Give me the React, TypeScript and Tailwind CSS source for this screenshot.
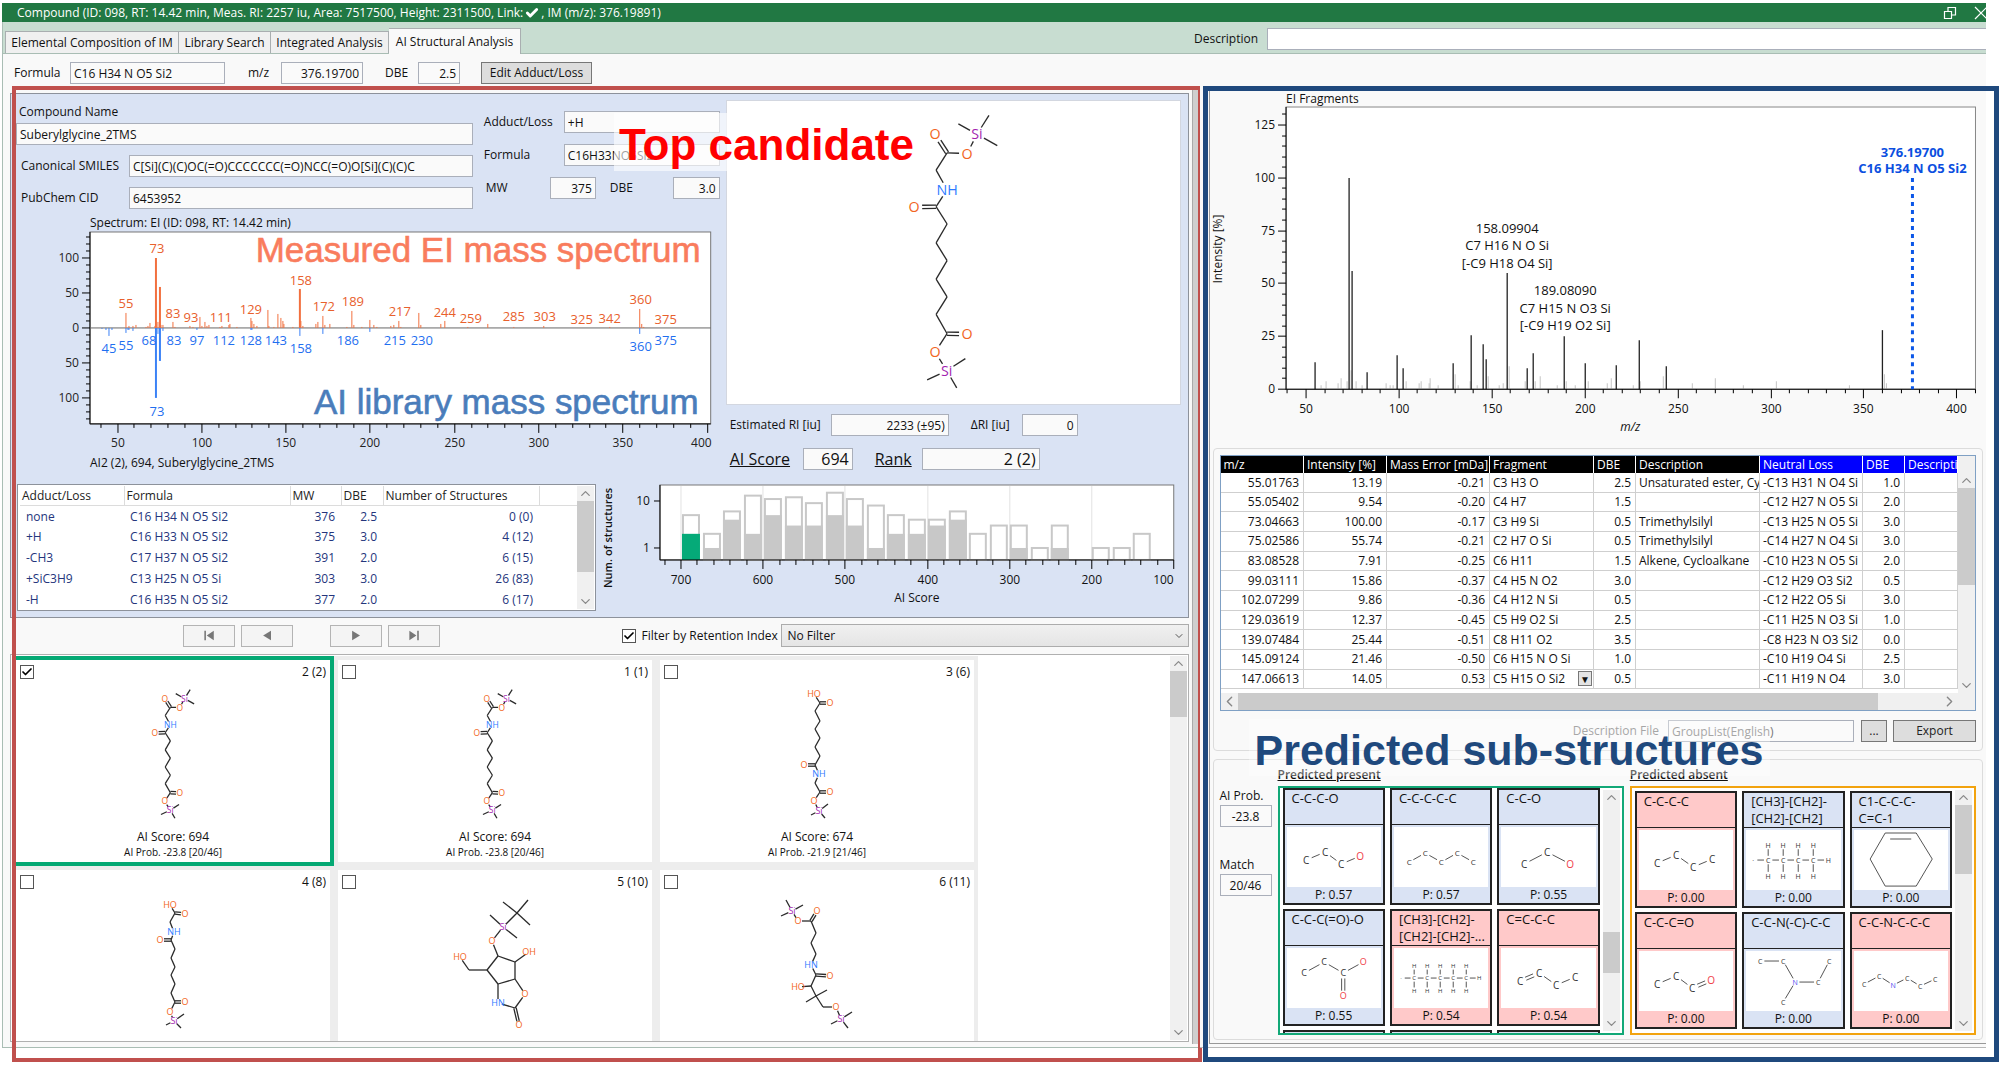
import { useId } from "react";
import { Check, ChevronDown, ChevronLeft, ChevronRight, ChevronUp } from "lucide-react";
import clsx from "clsx";

type Atom = [number, number, string?];
type Bond = [number, number, number?];
type Graph = { atoms: Atom[]; bonds: Bond[] };

const ATOM_COLORS: Record<string, string> = {
  O: "#f26522",
  HO: "#f26522",
  OH: "#f26522",
  NH: "#2f7bff",
  HN: "#2f7bff",
  Si: "#a31fb0",
};

const FRAGMENT_COLORS: Record<string, string> = { C: "#333", H: "#333", O: "#f03c46", N: "#4646f0" };

// Suberylglycine bis-TMS ester
const SUBERYL: Graph = {
  atoms: [
    [832, 402, "Si"], [776, 371], [868, 345], [893, 436], [802, 460, "O"], [742, 458], [706, 402, "O"],
    [709, 510], [742, 569, "NH"], [709, 620], [643, 621, "O"], [742, 672], [709, 729], [742, 782],
    [709, 838], [742, 891], [709, 944], [742, 1002], [802, 1003, "O"], [706, 1057, "O"],
    [741, 1113, "Si"], [797, 1077], [682, 1141], [771, 1165],
  ],
  bonds: [
    [0, 1], [0, 2], [0, 3], [0, 4], [4, 5], [5, 6, 2], [5, 7], [7, 8], [8, 9], [9, 10, 2], [9, 11], [11, 12],
    [12, 13], [13, 14], [14, 15], [15, 16], [16, 17], [17, 18, 2], [17, 19], [19, 20], [20, 21], [20, 22], [20, 23],
  ],
};

const MONO_TMS_GLYCINE: Graph = {
  atoms: [
    [154, 10, "HO"], [160, 19], [170, 19, "O"], [155, 27], [160, 37], [155, 45], [160, 54], [155, 63], [160, 72],
    [155, 81], [144, 81, "O"], [159, 90, "NH"], [155, 99], [160, 108], [170, 108, "O"], [154, 117, "O"],
    [159, 127, "Si"], [168, 120], [151, 131], [165, 134],
  ],
  bonds: [
    [0, 1], [1, 2, 2], [1, 3], [3, 4], [4, 5], [5, 6], [6, 7], [7, 8], [8, 9], [9, 10, 2], [9, 11], [11, 12],
    [12, 13], [13, 14, 2], [13, 15], [15, 16], [16, 17], [16, 18], [16, 19],
  ],
};

const MONO_TMS_ACID: Graph = {
  atoms: [
    [154, 11, "HO"], [159, 19], [169, 20, "O"], [154, 28], [158, 38, "NH"], [155, 46], [144, 46, "O"], [159, 55],
    [155, 64], [159, 73], [155, 81], [159, 90], [155, 99], [159, 108], [169, 108, "O"], [154, 118, "O"],
    [158, 127, "Si"], [168, 120], [150, 131], [165, 134],
  ],
  bonds: [
    [0, 1], [1, 2, 2], [1, 3], [3, 4], [4, 5], [5, 6, 2], [5, 7], [7, 8], [8, 9], [9, 10], [10, 11], [11, 12],
    [12, 13], [13, 14, 2], [13, 15], [15, 16], [16, 17], [16, 18], [16, 19],
  ],
};

const TBDMS_CARBAMATE: Graph = {
  atoms: [
    [179, 19], [165, 8], [190, 6], [192, 31], [165, 33, "Si"], [152, 21], [179, 44], [154, 47, "O"], [160, 62],
    [149, 76], [131, 76], [122, 63, "HO"], [160, 90], [177, 85], [177, 68], [191, 58, "OH"], [160, 109, "HN"],
    [177, 114], [187, 100, "O"], [181, 131, "O"],
  ],
  bonds: [
    [0, 1], [0, 2], [0, 3], [0, 4], [4, 5], [4, 6], [4, 7], [7, 8], [8, 9], [9, 10], [10, 11], [9, 12], [12, 13],
    [13, 14], [14, 8], [14, 15], [12, 16], [16, 17], [17, 18], [18, 13], [17, 19, 2],
  ],
};

const PANTOTHENATE_LIKE: Graph = {
  atoms: [
    [132, 17, "Si"], [126, 6], [143, 11], [121, 22], [138, 27, "O"], [151, 27], [157, 17, "O"], [156, 39],
    [151, 49], [156, 60], [151, 71, "HN"], [156, 81], [170, 82, "O"], [151, 92], [138, 93, "HO"], [156, 102],
    [167, 96], [146, 108], [163, 113], [176, 113, "O"], [181, 125, "Si"], [192, 118], [171, 130], [188, 134],
  ],
  bonds: [
    [0, 1], [0, 2], [0, 3], [0, 4], [4, 5], [5, 6, 2], [5, 7], [7, 8], [8, 9], [9, 10], [10, 11], [11, 12, 2],
    [11, 13], [13, 14], [13, 15], [15, 16], [15, 17], [15, 18], [18, 19], [19, 20], [20, 21], [20, 22], [20, 23],
  ],
};

function Molecule({
  graph,
  fontSize,
  stroke,
  trim,
  split,
  colors = ATOM_COLORS,
}: {
  graph: Graph;
  fontSize: number;
  stroke: number;
  trim: number;
  split: number;
  colors?: Record<string, string>;
}) {
  return (
    <g fontFamily='"Open Sans", sans-serif' fontSize={fontSize} textAnchor="middle">
      {graph.bonds.map(([a, b, order = 1], i) => {
        const [x1, y1, la] = graph.atoms[a];
        const [x2, y2, lb] = graph.atoms[b];
        const len = Math.hypot(x2 - x1, y2 - y1);
        const ux = (x2 - x1) / len;
        const uy = (y2 - y1) / len;
        const ta = la ? trim : 0;
        const tb = lb ? trim : 0;
        const offsets = order === 2 ? [-split, split] : [0];
        return offsets.map((o) => (
          <line
            key={`${i}:${o}`}
            x1={x1 + ux * ta - uy * o}
            y1={y1 + uy * ta + ux * o}
            x2={x2 - ux * tb - uy * o}
            y2={y2 - uy * tb + ux * o}
            stroke="#2a2a2a"
            strokeWidth={stroke}
          />
        ));
      })}
      {graph.atoms.map(([x, y, label], i) =>
        label ? (
          <text key={i} x={x} y={y + fontSize * 0.36} fill={colors[label] ?? "#333"}>
            {label}
          </text>
        ) : null,
      )}
    </g>
  );
}

const chain = (...atoms: Atom[]): Graph => ({
  atoms,
  bonds: atoms.slice(1).map((_, i) => [i, i + 1] as Bond),
});

// Fully drawn CH2 chain with an open left end
const hydrocarbon = (xs: number[], top: number, bottom: number, endX: number): Graph => {
  const atoms: Atom[] = [[7, 30, "·"], ...xs.map((x) => [x, 30, "C"] as Atom), [endX, 30, "H"]];
  const bonds: Bond[] = atoms.slice(1).map((_, i) => [i, i + 1] as Bond);
  xs.forEach((x, i) => {
    atoms.push([x, top, "H"], [x, bottom, "H"]);
    bonds.push([i + 1, atoms.length - 2], [i + 1, atoms.length - 1]);
  });
  return { atoms, bonds };
};

type Tile = { name: string; p: string; tone: "blue" | "red"; graph: Graph; size?: number };

const PRESENT: Tile[] = [
  { name: "C-C-C-O", p: "0.57", tone: "blue", graph: chain([19, 33, "C"], [38, 25, "C"], [54, 37, "C"], [73, 29, "O"]) },
  {
    name: "C-C-C-C-C",
    p: "0.57",
    tone: "blue",
    size: 8,
    graph: chain([15, 35, "C"], [31, 26, "C"], [47, 35, "C"], [63, 26, "C"], [79, 35, "C"]),
  },
  { name: "C-C-O", p: "0.55", tone: "blue", graph: chain([23, 37, "C"], [46, 25, "C"], [69, 37, "O"]) },
  {
    name: "C-C-C(=O)-O",
    p: "0.55",
    tone: "blue",
    size: 9,
    graph: {
      atoms: [[17, 25, "C"], [37, 14, "C"], [56, 25, "C"], [76, 14, "O"], [56, 48, "O"]],
      bonds: [[0, 1], [1, 2], [2, 3], [2, 4, 2]],
    },
  },
  { name: "[CH3]-[CH2]-\n[CH2]-[CH2]-...", p: "0.54", tone: "red", size: 6, graph: hydrocarbon([20, 33, 46, 59, 72], 18, 43, 85) },
  {
    name: "C=C-C-C",
    p: "0.54",
    tone: "red",
    graph: { atoms: [[19, 33, "C"], [38, 25, "C"], [55, 37, "C"], [74, 29, "C"]], bonds: [[0, 1, 2], [1, 2], [2, 3]] },
  },
];

const NEXT_PRESENT: Tile[] = [0, 1, 2].map(() => ({ name: "", p: "", tone: "blue", graph: { atoms: [], bonds: [] } }));

const ABSENT: Tile[] = [
  { name: "C-C-C-C", p: "0.00", tone: "red", graph: chain([18, 33, "C"], [37, 25, "C"], [54, 37, "C"], [73, 29, "C"]) },
  { name: "[CH3]-[CH2]-\n[CH2]-[CH2]", p: "0.00", tone: "blue", size: 7, graph: hydrocarbon([22, 37, 52, 67], 15, 46, 82) },
  {
    name: "C1-C-C-C-\nC=C-1",
    p: "0.00",
    tone: "blue",
    graph: {
      atoms: [[31, 3], [62, 3], [78, 29], [62, 56], [31, 56], [16, 29], [36, 9], [57, 9]],
      bonds: [[0, 1], [1, 2], [2, 3], [3, 4], [4, 5], [5, 0], [6, 7]],
    },
  },
  {
    name: "C-C-C=O",
    p: "0.00",
    tone: "red",
    graph: { atoms: [[18, 33, "C"], [37, 25, "C"], [53, 37, "C"], [72, 29, "O"]], bonds: [[0, 1], [1, 2], [2, 3, 2]] },
  },
  {
    name: "C-C-N(-C)-C-C",
    p: "0.00",
    tone: "blue",
    size: 7,
    graph: {
      atoms: [[14, 10, "C"], [37, 10, "C"], [49, 31, "N"], [37, 51, "C"], [72, 31, "C"], [83, 10, "C"]],
      bonds: [[0, 1], [1, 2], [2, 3], [2, 4], [4, 5]],
    },
  },
  {
    name: "C-C-N-C-C-C",
    p: "0.00",
    tone: "red",
    size: 7,
    graph: chain([10, 33, "C"], [25, 25, "C"], [39, 34, "N"], [53, 27, "C"], [66, 35, "C"], [81, 28, "C"]),
  },
];

const CANDIDATES: { rank: string; graph: Graph; score?: string; prob?: string; selected?: boolean }[] = [
  { rank: "2 (2)", graph: SUBERYL, score: "694", prob: "-23.8 [20/46]", selected: true },
  { rank: "1 (1)", graph: SUBERYL, score: "694", prob: "-23.8 [20/46]" },
  { rank: "3 (6)", graph: MONO_TMS_GLYCINE, score: "674", prob: "-21.9 [21/46]" },
  { rank: "4 (8)", graph: MONO_TMS_ACID },
  { rank: "5 (10)", graph: TBDMS_CARBAMATE },
  { rank: "6 (11)", graph: PANTOTHENATE_LIKE },
];

const ADDUCTS = [
  ["none", "C16 H34 N O5 Si2", "376", "2.5", "0 (0)"],
  ["+H", "C16 H33 N O5 Si2", "375", "3.0", "4 (12)"],
  ["-CH3", "C17 H37 N O5 Si2", "391", "2.0", "6 (15)"],
  ["+SiC3H9", "C13 H25 N O5 Si", "303", "3.0", "26 (83)"],
  ["-H", "C16 H35 N O5 Si2", "377", "2.0", "6 (17)"],
];

const FRAGMENTS = [
  ["55.01763", "13.19", "-0.21", "C3 H3 O", "2.5", "Unsaturated ester, Cy", "-C13 H31 N O4 Si", "1.0"],
  ["55.05402", "9.54", "-0.20", "C4 H7", "1.5", "", "-C12 H27 N O5 Si", "2.0"],
  ["73.04663", "100.00", "-0.17", "C3 H9 Si", "0.5", "Trimethylsilyl", "-C13 H25 N O5 Si", "3.0"],
  ["75.02586", "55.74", "-0.21", "C2 H7 O Si", "0.5", "Trimethylsilyl", "-C14 H27 N O4 Si", "3.0"],
  ["83.08528", "7.91", "-0.25", "C6 H11", "1.5", "Alkene, Cycloalkane", "-C10 H23 N O5 Si", "2.0"],
  ["99.03111", "15.86", "-0.37", "C4 H5 N O2", "3.0", "", "-C12 H29 O3 Si2", "0.5"],
  ["102.07299", "9.86", "-0.36", "C4 H12 N Si", "0.5", "", "-C12 H22 O5 Si", "3.0"],
  ["129.03619", "12.37", "-0.45", "C5 H9 O2 Si", "2.5", "", "-C11 H25 N O3 Si", "1.0"],
  ["139.07484", "25.44", "-0.51", "C8 H11 O2", "3.5", "", "-C8 H23 N O3 Si2", "0.0"],
  ["145.09124", "21.46", "-0.50", "C6 H15 N O Si", "1.0", "", "-C10 H19 O4 Si", "2.5"],
  ["147.06613", "14.05", "0.53", "C5 H15 O Si2", "0.5", "", "-C11 H19 N O4", "3.0"],
];

const MEASURED = [
  [55, 22], [57, 3], [59, 3], [61, 4], [67, 2], [68, 3], [69, 7], [72, 3], [73, 100], [74, 9], [75, 59], [76, 4],
  [77, 4], [83, 8], [84, 2], [93, 3], [95, 2], [99, 16], [100, 3], [102, 9], [103, 3], [104, 4], [111, 2],
  [112, 3], [116, 4], [117, 5], [121, 2], [129, 14], [130, 10], [131, 6], [133, 3], [139, 25], [140, 3],
  [143, 2], [145, 20], [147, 14], [148, 10], [149, 5], [154, 2], [158, 55], [159, 10], [160, 3], [168, 5],
  [169, 9], [172, 17], [173, 4], [176, 6], [186, 2], [189, 24], [190, 4], [195, 2], [200, 12], [202, 4],
  [204, 2], [212, 3], [214, 4], [217, 10], [218, 2], [229, 22], [230, 4], [242, 6], [244, 10], [258, 2],
  [270, 5], [285, 2], [303, 3], [342, 1], [360, 27], [361, 6], [362, 2],
];

const LIBRARY = [
  [41, 2], [43, 3], [45, 11], [47, 3], [55, 7], [56, 3], [57, 3], [59, 4], [73, 100], [74, 8], [75, 47],
  [77, 4], [97, 3], [129, 3], [130, 3], [158, 12], [172, 8], [200, 5], [360, 8],
];

const MEASURED_LABELS: [string, number, number][] = [
  ["73", 141, 35], ["158", 285, 67], ["55", 110, 90], ["83", 157, 100], ["93", 175, 104], ["111", 205, 104],
  ["129", 235, 96], ["172", 308, 93], ["189", 337, 88], ["217", 384, 98], ["244", 429, 99], ["259", 455, 105],
  ["285", 498, 103], ["303", 529, 103], ["325", 566, 106], ["342", 594, 105], ["375", 650, 106], ["360", 625, 86],
];

const LIBRARY_LABELS: [string, number, number][] = [
  ["45", 93, 135], ["55", 110, 132], ["68", 133, 127], ["83", 158, 127], ["97", 181, 127], ["112", 208, 127],
  ["128", 235, 127], ["143", 260, 127], ["158", 285, 135], ["186", 332, 127], ["215", 379, 127],
  ["230", 406, 127], ["360", 625, 133], ["375", 650, 127], ["73", 141, 198],
];

const HISTOGRAM = [
  [5, 2], [2, 1], [6, 4], [13, 2], [11, 5], [12, 3], [9, 3], [15, 5], [11, 3], [8, 1], [5, 2], [4, 2], [4, 3],
  [6, 4], [2, 0], [3, 0], [3, 1], [1, 0], [3, 1], [0, 0], [1, 0], [1, 0], [2, 0],
];

const ASSIGNED = [
  [55, 13], [73, 100], [75, 55.7], [83, 7.9], [99, 15.9], [102, 9.9], [129, 12.4], [139, 25.4], [145, 21.5],
  [147, 14], [158, 55], [169, 10], [172, 17], [189, 25], [200, 12.5], [217, 11.5], [229, 23], [244, 11], [360, 28],
];

const UNASSIGNED = [
  [58, 2], [61, 4], [67, 3], [69, 5], [72, 4], [74, 9], [77, 4], [80, 2], [93, 3], [95, 2], [97, 2], [104, 4],
  [111, 3], [112, 4], [116, 3], [117, 5], [121, 2], [130, 7], [132, 2], [138, 4], [142, 2], [148, 6], [154, 2],
  [156, 3], [159, 11], [168, 4], [173, 4], [176, 6], [185, 2], [190, 4], [195, 2], [202, 4], [212, 3], [214, 5],
  [226, 2], [230, 4], [242, 6], [258, 3], [270, 5], [285, 2], [303, 4], [342, 2], [361, 7], [362, 3],
];

const range = (from: number, to: number, step: number) =>
  Array.from({ length: Math.floor((to - from) / step) + 1 }, (_, i) => from + i * step);

function MirrorSpectrum() {
  const x = (m: number) => Math.round(101.5 + (m - 50) * 1.686);
  const y = (v: number) => Math.round(115 - v * 0.703);
  return (
    <svg viewBox="0 0 704 262" className="block w-full" fontSize="12" textAnchor="middle">
      <text x="74" y="14" textAnchor="start" fill="#111">Spectrum: EI (ID: 098, RT: 14.42 min)</text>
      <rect x="74" y="19" width="621" height="192" fill="#fff" stroke="#777" />
      <g stroke="#000">
        <path d="M74 19V211H695" fill="none" strokeWidth="1" />
        {range(-130, 130, 10).map((v) => (
          <line key={v} x1={v % 50 ? 70 : 66} x2="74" y1={y(v)} y2={y(v)} />
        ))}
        {range(40, 400, 10).map((m) => (
          <line key={m} x1={x(m)} x2={x(m)} y1="211" y2={m % 50 ? 215 : 220} />
        ))}
      </g>
      <line x1="74" x2="695" y1="115" y2="115" stroke="#666" />
      {[100, 50, 0, -50, -100].map((v) => (
        <text key={v} x="63" y={y(v) + 4} textAnchor="end" fill="#222">{Math.abs(v)}</text>
      ))}
      {range(50, 350, 50).map((m) => (
        <text key={m} x={x(m)} y="234" fill="#222">{m}</text>
      ))}
      <text x="696" y="234" textAnchor="end" fill="#222">400</text>
      {MEASURED.map(([m, v]) => (
        <line key={m} x1={x(m)} x2={x(m)} y1="115" y2={y(v)} stroke="#f2703f" strokeWidth={v > 40 ? 2 : 1} />
      ))}
      {LIBRARY.map(([m, v]) => (
        <line key={m} x1={x(m)} x2={x(m)} y1="115" y2={y(-v)} stroke="#3b82f6" strokeWidth={v > 40 ? 2 : 1} />
      ))}
      <g fill="#e8602c" fontSize="13">
        {MEASURED_LABELS.map(([t, lx, ly]) => (
          <text key={t} x={lx} y={ly + 5}>{t}</text>
        ))}
      </g>
      <g fill="#1f6ff0" fontSize="13">
        {LIBRARY_LABELS.map(([t, lx, ly]) => (
          <text key={t} x={lx} y={ly + 5}>{t}</text>
        ))}
      </g>
      <text x="74" y="254" textAnchor="start" fill="#111">AI2 (2), 694, Suberylglycine_2TMS</text>
      <g fontFamily='"Liberation Sans", Arial, sans-serif' fontSize="35" textAnchor="end" strokeWidth="0.6">
        <text x="685" y="49" fill="#f97c5d" stroke="#f97c5d">Measured EI mass spectrum</text>
        <text x="683" y="201" fill="#4a7dbb" stroke="#4a7dbb">AI library mass spectrum</text>
      </g>
    </svg>
  );
}

function ScoreHistogram() {
  const x = (s: number) => Math.round(85 + (700 - s) * 0.822);
  const y = (n: number) => 67 - 47 * Math.log10(n);
  return (
    <svg viewBox="0 0 592 134" className="block w-full" fontSize="12" textAnchor="middle" fill="#111">
      <text transform="translate(16 57) rotate(-90)" fontWeight="600" fontSize="11">Num. of structures</text>
      <rect x="64" y="4" width="514" height="75" fill="#fff" stroke="#777" />
      {range(200, 700, 100).map((s) => (
        <line key={s} x1={x(s)} x2={x(s)} y1="5" y2="79" stroke="#e2e2e2" />
      ))}
      {HISTOGRAM.map(([total, known], i) => {
        const left = 87 + Math.round(i * 20.5);
        return total ? (
          <g key={i}>
            <rect x={left} y={y(total)} width="16" height={79 - y(total)} fill="#fff" stroke="#c8c8c8" strokeWidth="2" />
            {known > 0 && (
              <rect x={left - 1} y={y(known)} width="18" height={79 - y(known)} fill={i ? "#c8c8c8" : "#05aa78"} />
            )}
          </g>
        ) : null;
      })}
      <g stroke="#000">
        <path d="M64 4V79H578" fill="none" />
        <path d="M58 20H64M58 67H64" />
        {range(100, 720, 20).map((s) => (
          <line key={s} x1={x(s)} x2={x(s)} y1="79" y2={s % 100 ? 84 : 88} />
        ))}
      </g>
      <text x="54" y="24" textAnchor="end">10</text>
      <text x="54" y="71" textAnchor="end">1</text>
      {range(200, 700, 100).map((s) => (
        <text key={s} x={x(s)} y="103">{s}</text>
      ))}
      <text x="578" y="103" textAnchor="end">100</text>
      <text x="321" y="121">AI Score</text>
    </svg>
  );
}

function FragmentChart() {
  const x = (m: number) => Math.round(96 + (m - 50) * 1.858);
  const y = (v: number) => Math.round(299 - v * 2.112);
  return (
    <svg viewBox="0 0 776 355" className="block w-full" fontSize="12" textAnchor="middle" fill="#111">
      <text x="76" y="13" textAnchor="start">EI Fragments</text>
      <text transform="translate(12 159) rotate(-90)">Intensity [%]</text>
      <rect x="76" y="17" width="689" height="282" fill="#fff" stroke="#888" />
      {UNASSIGNED.map(([m, v]) => (
        <line key={m} x1={x(m)} x2={x(m)} y1="299" y2={y(v)} stroke="#c4c4c4" />
      ))}
      {ASSIGNED.map(([m, v]) => (
        <line key={m} x1={x(m)} x2={x(m)} y1="299" y2={y(v)} stroke="#222" strokeWidth="1.3" />
      ))}
      <g stroke="#000">
        <path d="M76 17V299H765" fill="none" />
        {range(0, 130, 5).map((v) => (
          <line key={v} x1={v % 25 ? 72 : 68} x2="76" y1={y(v)} y2={y(v)} />
        ))}
        {range(40, 410, 10).map((m) => (
          <line key={m} x1={x(m)} x2={x(m)} y1="299" y2={m % 50 ? 303 : 308} />
        ))}
      </g>
      {range(0, 125, 25).map((v) => (
        <text key={v} x="65" y={y(v) + 4} textAnchor="end">{v}</text>
      ))}
      {range(50, 400, 50).map((m) => (
        <text key={m} x={x(m)} y="323">{m}</text>
      ))}
      <text x="420" y="341" fontStyle="italic">m/z</text>
      <g fontSize="13">
        <text x="297" y="143">158.09904</text>
        <text x="297" y="160">C7 H16 N O Si</text>
        <text x="297" y="178">[-C9 H18 O4 Si]</text>
        <text x="355" y="205">189.08090</text>
        <text x="355" y="223">C7 H15 N O3 Si</text>
        <text x="355" y="240">[-C9 H19 O2 Si]</text>
      </g>
      <line x1="702" x2="702" y1="88" y2="299" stroke="#0b57e8" strokeWidth="3" strokeDasharray="4 4" />
      <g fill="#0b4fe0" fontWeight="700" fontSize="13">
        <text x="702" y="67">376.19700</text>
        <text x="702" y="83">C16 H34 N O5 Si2</text>
      </g>
    </svg>
  );
}

function Field({
  label,
  value,
  className,
  labelClass,
  right = false,
}: {
  label: string;
  value: string;
  className: string;
  labelClass?: string;
  right?: boolean;
}) {
  const id = useId();
  return (
    <>
      <label htmlFor={id} className={clsx("whitespace-nowrap", labelClass)}>
        {label}
      </label>
      <input
        id={id}
        readOnly
        defaultValue={value}
        className={clsx(
          "h-[22px] min-w-0 border border-[#aaafba] bg-[#fafafa] px-[3px] outline-none",
          right && "text-right",
          className,
        )}
      />
    </>
  );
}

function CheckBox({ id, label, checked = false }: { id?: string; label?: string; checked?: boolean }) {
  return (
    <span className="relative inline-flex size-3.5">
      <input
        id={id}
        type="checkbox"
        aria-label={label}
        defaultChecked={checked}
        className="peer size-3.5 appearance-none border border-[#555] bg-white"
      />
      <Check
        strokeWidth={3.5}
        className="pointer-events-none absolute left-px top-px hidden size-3 text-black peer-checked:block"
      />
    </span>
  );
}

function VScroll({ thumb, className }: { thumb: string; className?: string }) {
  return (
    <div className={clsx("flex w-[17px] flex-none flex-col items-center bg-[#f0f0f0] text-[#888]", className)}>
      <ChevronUp className="size-[15px] flex-none" strokeWidth={2} />
      <div className="w-full flex-1">
        <div className={clsx("w-full bg-[#cbcbcb]", thumb)} />
      </div>
      <ChevronDown className="size-[15px] flex-none" strokeWidth={2} />
    </div>
  );
}

function TitleBar() {
  return (
    <header className="mr-[14px] ml-0.5 flex h-[19px] items-center justify-between overflow-hidden bg-[#217843] pl-[15px] text-[12px] text-white">
      <span className="flex items-center gap-0.5">
        Compound (ID: 098, RT: 14.42 min, Meas. RI: 2257 iu, Area: 7517500, Height: 2311500, Link:
        <Check className="size-3.5" strokeWidth={5} />, IM (m/z): 376.19891)
      </span>
      <span className="flex items-center gap-[17px]">
        <button aria-label="Restore">
          <svg viewBox="0 0 14 14" className="size-3.5" fill="none" stroke="#fff" strokeWidth="1.2">
            <path d="M1.5 5.5h7v7h-7zM5 5V1.500h7.500v7.500H9" />
          </svg>
        </button>
        <button aria-label="Close" className="-mr-0.5">
          <svg viewBox="0 0 14 14" className="size-3.5" stroke="#fff" strokeWidth="1.2">
            <path d="M1 1l12 12M13 1L1 13" />
          </svg>
        </button>
      </span>
    </header>
  );
}

function TabBar() {
  const tab = "h-[22px] whitespace-nowrap border border-b-0 border-[#a9aeb0] bg-[#f0f0f0] text-center";
  return (
    <div className="mr-[14px] ml-0.5 flex h-[32px] items-end border-b border-l border-[#a9bdb4] bg-[#c8ddd1] pl-0.5">
      <div role="tablist" className="flex items-end">
        <button role="tab" className={clsx(tab, "w-[174px]")}>Elemental Composition of IM</button>
        <button role="tab" className={clsx(tab, "w-[92px] border-l-0")}>Library Search</button>
        <button role="tab" className={clsx(tab, "w-[118px] border-l-0")}>Integrated Analysis</button>
        <button
          role="tab"
          aria-selected
          className="-mb-px h-[26px] w-[132px] border border-b-0 border-l-0 border-[#a9aeb0] bg-[#f9f9f9] text-center whitespace-nowrap"
        >
          AI Structural Analysis
        </button>
      </div>
      <div className="ml-auto flex w-[792px] items-center gap-[9px] pb-[3px]">
        <Field label="Description" value="" className="flex-1 border-r-0 bg-white" />
      </div>
    </div>
  );
}

function Toolbar() {
  return (
    <div className="mr-[14px] ml-0.5 flex h-[32px] items-center border-l border-[#a9bdb4] bg-[#f9f9f9] pt-1.5 pl-[11px]">
      <Field label="Formula" value="C16 H34 N O5 Si2" labelClass="w-14" className="w-[155px]" />
      <Field label="m/z" value="376.19700" right labelClass="ml-[23px] w-[33px]" className="w-[82px]" />
      <Field label="DBE" value="2.5" right labelClass="ml-[22px] w-[33px]" className="w-[42px]" />
      <button className="ml-[21px] h-[22px] w-[111px] border border-[#777] bg-[#dddddd] whitespace-nowrap">
        Edit Adduct/Loss
      </button>
    </div>
  );
}

function AdductTable() {
  const head = "border-r border-[#dcdcdc] pl-0.5 text-left font-normal text-[#222] whitespace-nowrap";
  return (
    <div className="mt-[3px] flex h-[127px] overflow-hidden border border-[#8d929b] bg-white p-px">
      <div className="min-w-0 flex-1 overflow-hidden pl-px">
        <table className="w-full table-fixed border-collapse">
          <thead>
            <tr className="h-5 border-b border-[#dcdcdc]">
              <th className={clsx(head, "w-[104px]")}>Adduct/Loss</th>
              <th className={clsx(head, "w-[166px]")}>Formula</th>
              <th className={clsx(head, "w-[51px]")}>MW</th>
              <th className={clsx(head, "w-[42px]")}>DBE</th>
              <th className={clsx(head, "w-[156px]")}>Number of Structures</th>
              <th />
            </tr>
          </thead>
          <tbody className="text-[#24357c]">
            {ADDUCTS.map(([name, formula, mw, dbe, count]) => (
              <tr key={name} className="h-[21px]">
                <td className="pl-1.5">{name}</td>
                <td className="pl-1.5">{formula}</td>
                <td className="pr-1.5 text-right">{mw}</td>
                <td className="pr-1.5 text-right">{dbe}</td>
                <td className="pr-1.5 text-right">{count}</td>
                <td />
              </tr>
            ))}
          </tbody>
        </table>
      </div>
      <VScroll thumb="h-[71px]" />
    </div>
  );
}

function TopCandidate() {
  return (
    <div className="relative border border-[#8d929b] bg-[#dae3f4]">
      <div className="flex gap-1.5 pt-1.5 pr-[7px] pl-[5px]">
        <div className="min-w-0 flex-[704]">
          <div className="flex gap-[11px]">
            <div className="min-w-0 flex-[457]">
              <div className="flex flex-col">
                <Field label="Compound Name" value="Suberylglycine_2TMS" labelClass="h-[23px] pl-[3px] leading-[23px]" className="w-full" />
              </div>
              <div className="mt-2.5 flex items-center">
                <Field
                  label="Canonical SMILES"
                  value="C[Si](C)(C)OC(=O)CCCCCCC(=O)NCC(=O)O[Si](C)(C)C"
                  labelClass="w-[113px] pl-[5px]"
                  className="flex-1"
                />
              </div>
              <div className="mt-2.5 flex items-center">
                <Field label="PubChem CID" value="6453952" labelClass="w-[113px] pl-[5px]" className="flex-1" />
              </div>
            </div>
            <div className="flex min-w-0 flex-[236] flex-col gap-[11px] pt-[11px]">
              <div className="flex items-center">
                <Field label="Adduct/Loss" value="+H" labelClass="w-20" className="flex-1" />
              </div>
              <div className="flex items-center">
                <Field label="Formula" value="C16H33NO5Si2" labelClass="w-20" className="flex-1" />
              </div>
              <div className="flex items-center">
                <Field label="MW" value="375" right labelClass="w-[66px] pl-0.5" className="w-[46px]" />
                <Field label="DBE" value="3.0" right labelClass="ml-3.5" className="ml-auto w-[47px]" />
              </div>
            </div>
          </div>
          <div className="mt-1">
            <MirrorSpectrum />
          </div>
        </div>
        <div className="min-w-0 flex-[455]">
          <svg viewBox="80 302 1362 912" className="block w-full border border-[#d3d7e0] bg-white">
            <Molecule graph={SUBERYL} fontSize={43} stroke={4} trim={24} split={5} />
          </svg>
          <div className="mt-[9px] flex items-center pl-1">
            <Field label="Estimated RI [iu]" value="2233 (±95)" right labelClass="w-[101px]" className="w-[118px]" />
            <Field label="ΔRI [iu]" value="0" right labelClass="ml-[22px] w-[51px]" className="w-[56px]" />
          </div>
          <div className="mt-3 flex items-center pl-1 text-[16px]">
            <Field label="AI Score" value="694" right labelClass="w-[73px] underline" className="w-[50px]" />
            <Field label="Rank" value="2 (2)" right labelClass="ml-[22px] w-[47px] underline" className="w-[118px]" />
          </div>
        </div>
      </div>
      <div className="mt-1.5 flex pl-1.5 pb-0.5">
        <div className="min-w-0 flex-[579]">
          <AdductTable />
        </div>
        <div className="min-w-0 flex-[592]">
          <ScoreHistogram />
        </div>
      </div>
      {/* callout over the adduct fields */}
      <div className="absolute top-[19px] left-[603px] flex h-[58px] w-[304px] items-center bg-white/60 pt-1.5 pl-[5px] font-['Liberation_Sans',Arial,sans-serif] text-[44px] leading-none font-bold whitespace-nowrap text-[#ff0000]">
        Top candidate
      </div>
    </div>
  );
}

const NAV_ICONS: [string, string][] = [
  ["First", "M3 1h2v12H3zM15 1v12L6 7z"],
  ["Previous", "M14 1v12L4 7z"],
  ["Next", "M4 1v12l10-6z"],
  ["Last", "M13 1h2v12h-2zM3 1v12l9-6z"],
];

function Pager() {
  return (
    <div className="flex h-9 items-center pl-[173px]">
      {NAV_ICONS.map(([label, d], i) => (
        <button
          key={label}
          aria-label={label}
          className={clsx(
            "flex h-[22px] w-[52px] items-center justify-center border border-[#b4b4b4] bg-[#f4f4f4]",
            i === 2 ? "ml-[37px]" : i > 0 && "ml-1.5",
          )}
        >
          <svg viewBox="0 0 18 14" className="h-[11px]" fill="#777">
            <path d={d} />
          </svg>
        </button>
      ))}
      <span className="ml-auto flex items-center gap-1.5">
        <CheckBox id="filter-ri" checked />
        <label htmlFor="filter-ri" className="w-[133px] whitespace-nowrap">
          Filter by Retention Index
        </label>
      </span>
      <div className="relative ml-1.5 w-[408px]">
        <select
          aria-label="Retention index filter"
          className="h-[23px] w-full appearance-none border border-[#acacac] bg-linear-to-b from-[#f0f0f0] to-[#e5e5e5] px-1.5"
        >
          <option>No Filter</option>
        </select>
        <ChevronDown className="pointer-events-none absolute top-1.5 right-1 size-3 text-[#555]" />
      </div>
    </div>
  );
}

function CandidateList() {
  return (
    <div className="flex h-[388px] overflow-hidden border border-[#b0b0b0] bg-white p-px">
      <div className="min-w-0 flex-1">
        <div className="grid w-[966px] grid-cols-3">
          {CANDIDATES.map((c) => (
            <article
              key={c.rank}
              className={clsx("h-[210px] border-4 bg-white", c.selected ? "border-[#05a974]" : "border-[#ededed]")}
            >
              <div className="flex h-6 items-center justify-between pr-1 pl-1">
                <CheckBox label={`Candidate ${c.rank}`} checked={c.selected} />
                <span>{c.rank}</span>
              </div>
              <svg viewBox="0 0 314 144" className="block w-full">
                {c.graph === SUBERYL ? (
                  <g transform="translate(37.900 -48.600) scale(0.157)">
                    <Molecule graph={c.graph} fontSize={54} stroke={8} trim={24} split={8} />
                  </g>
                ) : (
                  <Molecule graph={c.graph} fontSize={9} stroke={1.3} trim={4} split={1.2} />
                )}
              </svg>
              {c.score && <p className="text-center leading-[18px]">AI Score: {c.score}</p>}
              {c.prob && <p className="text-center text-[10px] leading-3">AI Prob. {c.prob}</p>}
            </article>
          ))}
        </div>
      </div>
      <VScroll thumb="h-[46px]" />
    </div>
  );
}

const FRAGMENT_COLUMNS: [string, string, boolean][] = [
  ["m/z", "w-[83px]", true],
  ["Intensity [%]", "w-[83px]", true],
  ["Mass Error [mDa]", "w-[103px]", true],
  ["Fragment", "w-[104px]", false],
  ["DBE", "w-[42px]", true],
  ["Description", "w-[124px]", false],
  ["Neutral Loss", "w-[103px]", false],
  ["DBE", "w-[42px]", true],
  ["Descripti", "w-[53px]", false],
];

function DropButton() {
  return (
    <button
      aria-label="Choose fragment"
      className="mr-px flex h-[15px] w-3.5 items-center justify-center border border-[#777] bg-[#e4e4e4] text-[10px] leading-none"
    >
      ▼
    </button>
  );
}

function FragmentTable() {
  return (
    <div className="h-[256px] overflow-hidden border border-[#7fa0c4] bg-white">
      <div className="flex h-[237px] overflow-hidden">
        <div className="min-w-0 flex-1 overflow-hidden">
          <table className="h-[233px] w-full table-fixed border-collapse">
            <thead>
              <tr className="h-[17px] text-white">
                {FRAGMENT_COLUMNS.map(([name, width], i) => (
                  <th
                    key={i}
                    className={clsx(
                      "overflow-hidden border-r border-white p-0 pl-[3px] text-left leading-[16px] font-normal whitespace-nowrap",
                      width,
                      i > 5 ? "bg-[#0000ff]" : "bg-black",
                    )}
                  >
                    {name}
                  </th>
                ))}
              </tr>
            </thead>
            <tbody>
              {FRAGMENTS.map((row) => (
                <tr key={row[0]}>
                  {FRAGMENT_COLUMNS.map(([, , right], i) => (
                    <td
                      key={i}
                      className={clsx(
                        "overflow-hidden border-r border-b border-[#cfcfcf] p-0 leading-[16px] whitespace-nowrap",
                        right ? "pr-1 text-right" : "pl-[3px]",
                      )}
                    >
                      {i === 3 && row[0] === "147.06613" ? (
                        <span className="flex items-center justify-between">
                          {row[i]}
                          <DropButton />
                        </span>
                      ) : (
                        row[i]
                      )}
                    </td>
                  ))}
                </tr>
              ))}
            </tbody>
          </table>
        </div>
        <VScroll thumb="h-[97px]" className="pt-[17px]" />
      </div>
      <div className="flex h-[17px] items-center bg-[#f0f0f0] pr-[17px] text-[#888]">
        <ChevronLeft className="size-[17px] flex-none" />
        <div className="h-full flex-1">
          <div className="h-full w-[91%] bg-[#cbcbcb]" />
        </div>
        <ChevronRight className="size-[17px] flex-none" />
      </div>
    </div>
  );
}

function SubstructureTile({ tile }: { tile: Tile }) {
  const size = tile.size ?? 10;
  return (
    <article
      className={clsx(
        "flex h-[117px] flex-col border-2 border-[#222] text-[13px]",
        tile.tone === "blue" ? "bg-[#dae3f4]" : "bg-[#ffc9c9]",
      )}
    >
      <h3 className="h-[35px] overflow-hidden border-b border-[#222] pl-[7px] leading-[17px] whitespace-pre">{tile.name}</h3>
      <svg viewBox="0 0 94 60" className="mx-0.5 mt-0.5 block bg-white">
        <Molecule graph={tile.graph} fontSize={size} stroke={0.8} trim={size * 0.6} split={1.6} colors={FRAGMENT_COLORS} />
      </svg>
      <p className="mt-auto text-center text-[12px] leading-4">{tile.p && `P: ${tile.p}`}</p>
    </article>
  );
}

function Substructures({ title, tiles, frame, pad, thumb }: {
  title: string;
  tiles: Tile[];
  frame: string;
  pad?: string;
  thumb: string;
}) {
  return (
    <section className="min-w-0 flex-1">
      <h2 className="h-5 text-[12px] leading-[18px] font-semibold underline">{title}</h2>
      <div className={clsx("flex h-[249px] overflow-hidden border-2 bg-white", frame)}>
        <div className={clsx("grid min-w-0 flex-1 auto-rows-min grid-cols-3 gap-x-[5px] gap-y-1 px-[3px]", pad)}>
          {tiles.map((t, i) => (
            <SubstructureTile key={i} tile={t} />
          ))}
        </div>
        <VScroll thumb={thumb} className="my-0.5 mr-0.5" />
      </div>
    </section>
  );
}

function PredictionPanel() {
  return (
    <div className="mx-[3px] mt-2 flex gap-1.5 rounded-[4px] border border-[#dcdcdc] px-1.5 pt-1.5 pb-1">
      <div className="flex w-[52px] flex-none flex-col pt-5">
        <Field label="AI Prob." value="-23.8" labelClass="leading-[19px]" className="w-full text-center" />
        <Field label="Match" value="20/46" labelClass="mt-7 leading-[19px]" className="w-full text-center" />
      </div>
      <Substructures
        title="Predicted present"
        tiles={[...PRESENT, ...NEXT_PRESENT]}
        frame="border-[#12a877]"
        thumb="mt-[127px] h-[41px]"
      />
      <Substructures title="Predicted absent" tiles={ABSENT} frame="border-[#f2a30f]" pad="pt-[3px]" thumb="h-[69px]" />
    </div>
  );
}

export default function App() {
  return (
    <div className="min-h-screen bg-white pt-[3px] font-['Open_Sans','Noto_Sans',sans-serif] text-[12px] leading-4 text-[#111]">
      <TitleBar />
      <TabBar />
      <Toolbar />
      <main className="grid grid-cols-[3fr_2fr]">
        <section className="relative pb-3.5">
          <div className="ml-0.5 flex border-b border-l border-[#a9bdb4] bg-[#f9f9f9]">
            <div className="min-w-0 flex-1 pt-[7px] pr-[3px] pb-[5px] pl-[7px]">
              <TopCandidate />
              <Pager />
              <CandidateList />
            </div>
            <div className="mb-[3px] w-2 border-l border-[#aaa] bg-[#cfcfcf]" />
          </div>
          <div className="pointer-events-none absolute top-0 -right-0.5 bottom-0 left-3 border-4 border-[#c0504d]" />
        </section>

        <section className="relative pb-3.5">
          <div className="mr-[14px] border-b border-[#b8b8b8] bg-[#f9f9f9] pb-[3px] pl-[9px]">
            <div className="border-b border-l border-[#999] pt-1 pb-[3px]">
              <FragmentChart />
              <div className="mx-[3px] mt-[3px] rounded-[4px] border border-[#dcdcdc] px-1.5 pt-1.5 pb-2">
                <FragmentTable />
                <div className="mt-[9px] flex items-center justify-end text-[#777]">
                  <Field label="Description File" value="GroupList(English)" labelClass="mr-[9px]" className="w-[186px]" />
                  <button className="ml-[7px] h-[22px] w-[26px] border border-[#777] bg-[#dddddd] text-[#222]">...</button>
                  <button className="ml-1.5 h-[22px] w-[83px] border border-[#777] bg-[#dddddd] text-[#222]">Export</button>
                </div>
              </div>
              <PredictionPanel />
            </div>
          </div>
          <div className="pointer-events-none absolute top-0 right-px bottom-0 left-[3px] border-[5px] border-[#1f497d]" />
          {/* callout over the export row */}
          <div className="absolute top-[633px] left-[49px] flex h-[57px] w-[521px] items-center bg-white/35 pt-[5px] pl-1.5 font-['Liberation_Sans',Arial,sans-serif] text-[43px] leading-none font-bold whitespace-nowrap text-[#1f497d]">
            Predicted sub-structures
          </div>
        </section>
      </main>
    </div>
  );
}
